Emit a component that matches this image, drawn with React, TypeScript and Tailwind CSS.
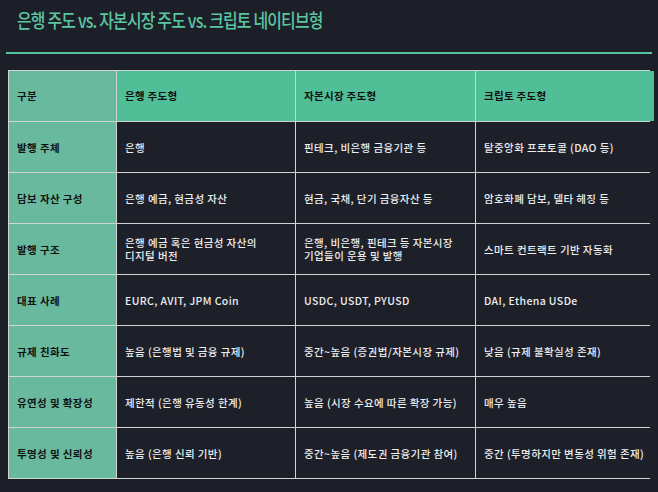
import React from "react";

const rows = [
  ["발행 주체", "은행", "핀테크, 비은행 금융기관 등", "탈중앙화 프로토콜 (DAO 등)"],
  ["담보 자산 구성", "은행 예금, 현금성 자산", "현금, 국채, 단기 금융자산 등", "암호화폐 담보, 델타 헤징 등"],
  [
    "발행 구조",
    "은행 예금 혹은 현금성 자산의\n디지털 버전",
    "은행, 비은행, 핀테크 등 자본시장\n기업들이 운용 및 발행",
    "스마트 컨트랙트 기반 자동화",
  ],
  ["대표 사례", "EURC, AVIT, JPM Coin", "USDC, USDT, PYUSD", "DAI, Ethena USDe"],
  ["규제 친화도", "높음 (은행법 및 금융 규제)", "중간~높음 (증권법/자본시장 규제)", "낮음 (규제 불확실성 존재)"],
  ["유연성 및 확장성", "제한적 (은행 유동성 한계)", "높음 (시장 수요에 따른 확장 가능)", "매우 높음"],
  ["투명성 및 신뢰성", "높음 (은행 신뢰 기반)", "중간~높음 (제도권 금융기관 참여)", "중간 (투명하지만 변동성 위험 존재)"],
];

const headers = ["구분", "은행 주도형", "자본시장 주도형", "크립토 주도형"];

export default function App() {
  return (
    <div
      className="w-[658px] h-[492px] bg-[#1c1f27] overflow-hidden"
      style={{ fontFamily: '"Noto Sans CJK KR", "Noto Sans", sans-serif' }}
    >
      {/* title */}
      <div className="h-[52px] pl-[17px] pt-[5px]">
        <h1 className="text-[19px] leading-[30px] font-medium text-[#5cc6a0] tracking-[-1px] origin-left scale-x-[0.84] whitespace-nowrap">
          은행 주도 vs. 자본시장 주도 vs. 크립토 네이티브형
        </h1>
      </div>
      <div className="mx-[6px] h-[2px] bg-[#55c49c]" />

      {/* table */}
      <div className="pl-[8px] pt-[16px]">
        <div className="grid grid-cols-[107px_178px_179px_178px] w-[642px] bg-[#cfd4d2] gap-px p-px">
          {headers.map((h, i) => (
            <div
              key={h}
              className={`h-[50px] flex items-center px-[8px] text-[10.5px] tracking-[0.3px] font-bold text-[#111] ${
                i === 0 ? "bg-[#68b99e]" : "bg-[#50bf98]"
              }`}
            >
              {h}
            </div>
          ))}
          {rows.map((r, ri) =>
            r.map((c, ci) => (
              <div
                key={`${ri}-${ci}`}
                className={`h-[50px] flex items-center px-[8px] text-[10.5px] leading-[13px] tracking-[0.4px] whitespace-pre-line ${
                  ci === 0 ? "bg-[#68b99e] font-bold text-[#111]" : "bg-[#1e2029] font-medium text-[#eceef0]"
                }`}
              >
                {c}
              </div>
            ))
          )}
        </div>
      </div>
    </div>
  );
}
